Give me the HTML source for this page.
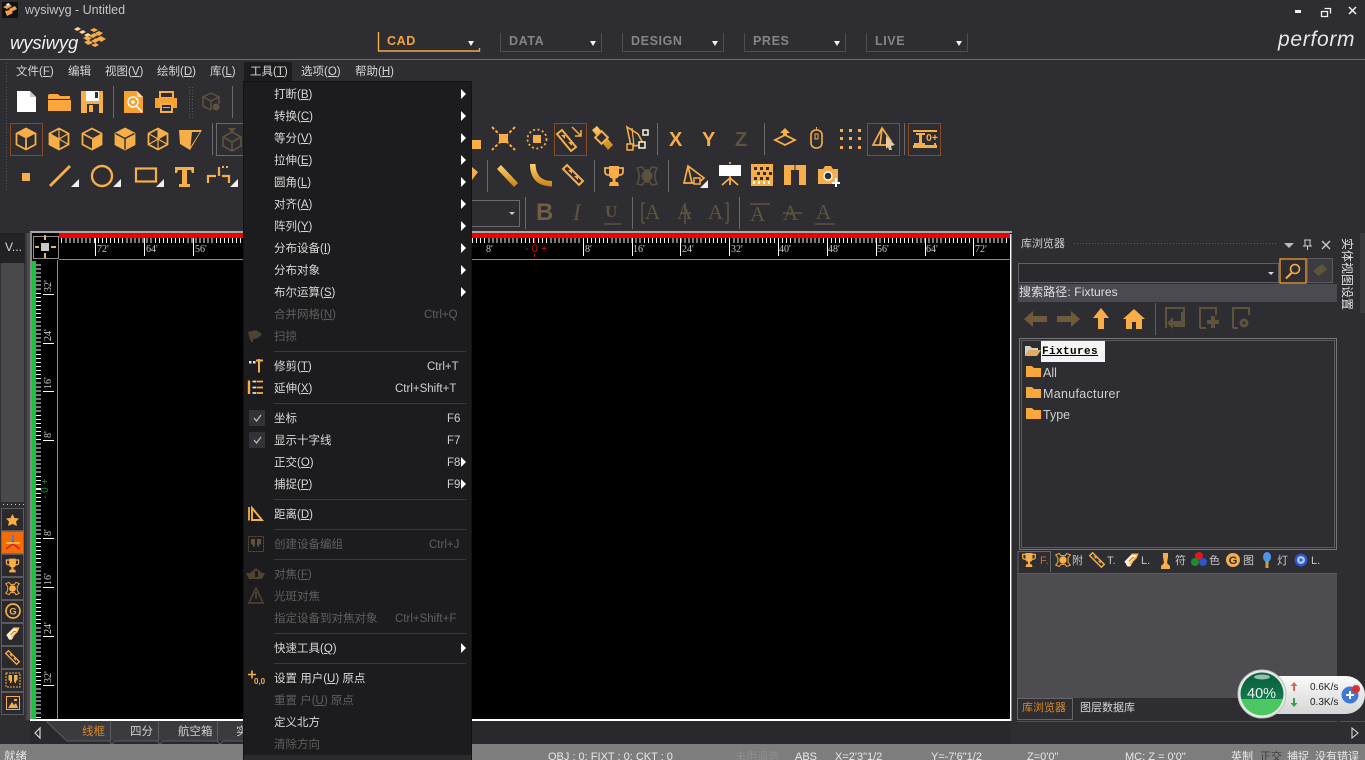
<!DOCTYPE html>
<html lang="zh">
<head>
<meta charset="utf-8">
<title>wysiwyg - Untitled</title>
<style>
html,body{margin:0;padding:0;width:1365px;height:760px;overflow:hidden;background:#2d2d32}
body{position:relative;font:12px/16px "Liberation Sans","Noto Sans CJK SC",sans-serif;color:#d6d6d6}
.a,.t{position:absolute}
.t{white-space:nowrap;height:16px;line-height:16px}
svg{position:absolute;left:0;top:0}
.m{position:absolute;left:274px;white-space:nowrap;height:16px;line-height:16px;font-size:11.5px;color:#d8d8d8}
.t.d,.m.d{color:#5f5f5f}
.nav{position:absolute;top:34px;font:bold 12.5px/14px "Liberation Sans",sans-serif;letter-spacing:.6px;color:#858585}
.st{position:absolute;top:749px;font-size:11.5px;line-height:16px;color:#e8e8e8;white-space:nowrap}
.tb{position:absolute;top:553px;font-size:11px;line-height:16px;color:#c8c8c8}
</style>
</head>
<body>

<!-- base graphics -->
<svg width="1365" height="760" viewBox="0 0 1365 760">
<defs>
<pattern id="dots" width="3" height="3" patternUnits="userSpaceOnUse"><rect width="1" height="1" fill="#5a5a5e"/></pattern>
<linearGradient id="gl" x1="0" y1="0" x2="0" y2="1"><stop offset="0" stop-color="#ffd071"/><stop offset="1" stop-color="#c98212"/></linearGradient>
<linearGradient id="pill" x1="0" y1="0" x2="0" y2="1"><stop offset="0" stop-color="#fafafa"/><stop offset="1" stop-color="#d6d6d6"/></linearGradient>
<linearGradient id="gdark" x1="0" y1="0" x2="0" y2="1"><stop offset="0" stop-color="#0a5c3a"/><stop offset="1" stop-color="#117a4b"/></linearGradient>
<symbol id="cubeA" viewBox="-12 -12 24 24" overflow="visible"><path d="M0-10.5 9.5-5.5V5.5L0 10.5-9.5 5.5V-5.5Z" fill="none" stroke="#f8ae48" stroke-width="1.800"/><path d="M-9.500-5.500 0-.5 9.500-5.500 0-10.500Z" fill="#f8ae48"/><path d="M0-.5V10.500" stroke="#f8ae48" stroke-width="1.800"/></symbol>
<symbol id="cubeB" viewBox="-12 -12 24 24" overflow="visible"><path d="M0-10.5 9.5-5.5V5.5L0 10.5-9.5 5.5V-5.5Z" fill="none" stroke="#f8ae48" stroke-width="1.800"/><path d="M-9.500-5.500 0-.5V10.500L-9.500 5.500Z" fill="#f8ae48"/><path d="M0-10.500V10.500M-9.500 5.500 9.500-5.500M-9.500-5.500 9.500 5.500" stroke="#f8ae48" stroke-width="1.200"/></symbol>
<symbol id="cubeC" viewBox="-12 -12 24 24" overflow="visible"><path d="M0-10.5 9.5-5.5V5.5L0 10.5-9.5 5.5V-5.5Z" fill="none" stroke="#f8ae48" stroke-width="1.800"/><path d="M0-.5 9.500-5.500V5.500L0 10.500Z" fill="#f8ae48"/><path d="M-9.500-5.500 0-.5" stroke="#f8ae48" stroke-width="1.800"/></symbol>
<symbol id="cubeD" viewBox="-12 -12 24 24" overflow="visible"><path d="M0-10.5 9.5-5.5V5.5L0 10.5-9.5 5.5V-5.5Z" fill="#f8ae48" stroke="#f8ae48" stroke-width="1.800"/><path d="M-9.500-5.500 0-.5 9.500-5.500" fill="none" stroke="#2d2d32" stroke-width="1.400"/><path d="M0-.5V10.500" stroke="#2d2d32" stroke-width="1.400"/></symbol>
<symbol id="cubeE" viewBox="-12 -12 24 24" overflow="visible"><path d="M0-10.5 9.5-5.5V5.5L0 10.5-9.5 5.5V-5.5Z" fill="none" stroke="#f8ae48" stroke-width="1.800"/><path d="M0-.5 9.500-5.500 0-10.500Z" fill="#f8ae48"/><path d="M0-10.500V10.500M-9.500-5.500 9.500 5.500M-9.500 5.500 9.500-5.500" stroke="#f8ae48" stroke-width="1.200"/></symbol>
<symbol id="corner" viewBox="0 0 8 8"><path d="M8 0V8H0Z" fill="#f0f0f0"/></symbol>
<symbol id="trophy" viewBox="-10 -11 20 22" overflow="visible"><path d="M-5-10H5V-1Q5 2 1.500 2.500V6H4L5 10H-5L-4 6H-1.500V2.500Q-5 2-5-1Z" fill="#f8ae48"/><path d="M-5-8H-9V-4Q-9-1-5-1M5-8H9V-4Q9-1 5-1" fill="none" stroke="#f8ae48" stroke-width="1.800"/></symbol>
<symbol id="spot" viewBox="-11 -11 22 22" overflow="visible"><circle r="5" fill="#f8ae48"/><path d="M-10-7-5-9-3-6H3L5-9 10-7 7-3V3L10 7 5 9 3 6H-3L-5 9-10 7-7 3V-3Z" fill="none" stroke="#f8ae48" stroke-width="1.400"/></symbol>
<symbol id="rul" viewBox="-11 -11 22 22" overflow="visible"><path d="M-6-10-10-6 6 10 10 6Z" fill="none" stroke="#f8ae48" stroke-width="2"/><path d="M-5-5-1-5-1-1ZM1 1 5 1 5 5Z" fill="#f8ae48"/><path d="M-3-7 7 3" stroke="#f8ae48" stroke-width="1"/></symbol>
<symbol id="book" viewBox="-11 -11 22 22" overflow="visible"><path d="M-9 2 1-8H9L-1 9H-5Z" fill="#fff2d6"/><path d="M1-8H9L7-3-2 6" fill="none" stroke="#f8ae48" stroke-width="2"/><path d="M-3 2 2-3H5" fill="none" stroke="#c98212" stroke-width="1.600"/></symbol>
</defs>

<rect width="1365" height="760" fill="#2d2d32"/>
<rect y="59" width="1365" height="1" fill="#6e6e6e"/>

<!-- window icon -->
<rect x="2" y="2" width="16" height="16" fill="#111"/>
<path d="M3 7 9 4 12 6 7 9ZM9 9 15 6 17 9 11 12ZM5 11 10 10 13 13 7 16Z" fill="#f0a050"/><path d="M6 4 9 3 10 5 7 6Z" fill="#e6e6e6"/>
<!-- logo cluster -->
<g fill="#f5a947">
<path d="M74 29 78 27 81 29 77 31ZM79 32 83 30 86 32 82 34ZM84 35 88 33 91 35 87 37Z" fill="#ffd58f"/>
<path d="M90 30 94 28 98 30 94 32ZM83 38 87 36 92 38 88 41ZM89 36 94 33 98 35 93 38ZM95 33 99 31 103 33 99 36Z"/>
<path d="M84 42 89 40 93 43 88 45ZM91 41 96 38 100 40 95 43ZM97 38 101 36 106 39 101 42ZM91 45 96 43 99 45 95 47Z"/>
</g>
<!-- window controls -->
<rect x="1295" y="10" width="6" height="3" fill="#f0f0f0"/>
<path d="M1324.500 8.500h6v5M1321.500 11.500h6v5h-6Z" fill="none" stroke="#f0f0f0" stroke-width="1.300"/>
<path d="M1349 7 1356 14M1356 7 1349 14" stroke="#f0f0f0" stroke-width="1.500"/>
<!-- nav tabs -->
<g fill="none" stroke="#4e4e52">
<path d="M500.500 33V51.500H601.500V33M622.500 33V51.500H723.500V33M744.500 33V51.500H845.500V33M866.500 33V51.500H967.500V33"/>
</g>
<path d="M378.500 32V51H479.500V48" fill="none" stroke="#f5a947" stroke-width="1.400"/>
<path d="M468 41h6l-3 5ZM590 41h6l-3 5ZM712 41h6l-3 5ZM834 41h6l-3 5ZM956 41h6l-3 5Z" fill="#f0f0f0"/>
<!-- grips -->
<rect x="5" y="62" width="3" height="20" fill="url(#dots)"/>
<rect x="4" y="86" width="3" height="106" fill="url(#dots)"/>
<rect x="189" y="86" width="4" height="33" fill="url(#dots)"/>

<!-- row 1 -->
<path d="M17 91H30L36 97V112H17Z" fill="#fff"/><path d="M30 91 36 97H30Z" fill="#c9c9c9"/>
<path d="M48 96Q48 94 50 94H58L60 96H70V99H48Z" fill="#f8a83a"/><path d="M48 100H71V111H48Z" fill="#f8a83a"/>
<path d="M81 91H103V113H81Z" fill="#f8ae48"/><rect x="86" y="91" width="13" height="10" fill="#fff"/><rect x="95" y="92" width="3" height="6" fill="#2d2d32"/><rect x="87" y="104" width="12" height="9" fill="#2d2d32"/><rect x="89" y="105" width="4" height="7" fill="#f8ae48"/>
<rect x="113" y="86" width="1" height="32" fill="#6a6a6a"/>
<path d="M124 91H137L143 97V113H124Z" fill="#f8a030"/><path d="M137 91 143 97H137Z" fill="#ffd9a0"/><circle cx="133" cy="102" r="5" fill="none" stroke="#fff" stroke-width="1.500"/><path d="M136.500 106 142 112M131 102h4M133 100v4" stroke="#fff" stroke-width="1.500"/>
<path d="M160 92H173V98H160Z" fill="none" stroke="#f8ae48" stroke-width="2"/><path d="M155 98H177V108H173V104H160V108H155Z" fill="#f8a030"/><path d="M161 104H172V112H161Z" fill="none" stroke="#f8ae48" stroke-width="2"/><rect x="163" y="107" width="7" height="1" fill="#f8ae48"/>
<g stroke="#5f5340" fill="none" stroke-width="1.500"><path d="M211 93 219 97V104M211 93 203 97V106L211 110M203 97 211 101 219 97M211 101V110"/></g><circle cx="216" cy="107" r="3.500" fill="#5f5340"/>
<rect x="232" y="86" width="1" height="32" fill="#6a6a6a"/>

<!-- row 2 -->
<rect x="10.500" y="123.500" width="32" height="32" fill="none" stroke="#8a4a22"/>
<use href="#cubeA" x="14" y="127" width="24" height="24"/>
<use href="#cubeB" x="47" y="127" width="24" height="24"/>
<use href="#cubeC" x="80" y="127" width="24" height="24"/>
<use href="#cubeD" x="113" y="127" width="24" height="24"/>
<use href="#cubeE" x="146" y="127" width="24" height="24"/>
<path d="M179 130H202L190 150 180 144Z" fill="#f8ae48"/><path d="M192 132H200L190.500 147Z" fill="#2d2d32"/>
<rect x="212" y="123" width="1" height="32" fill="#6a6a6a"/>
<rect x="216.500" y="123.500" width="28" height="32" fill="none" stroke="#6a6a6a"/>
<path d="M232 132 241 137V146L232 151 223 146V137ZM223 137 232 142 241 137M232 142V151" fill="none" stroke="#5f5340" stroke-width="1.600"/><path d="M228 128H236L232 133Z" fill="#5f5340"/>

<!-- row 2 right -->
<rect x="472" y="140" width="9" height="9" fill="#f8ae48"/>
<g stroke="#f8ae48" stroke-width="2" stroke-dasharray="3 2"><path d="M492 127 515 150M515 127 492 150"/></g><rect x="499" y="134" width="9" height="9" fill="#f8ae48"/>
<circle cx="537" cy="139" r="9.500" fill="none" stroke="#f8ae48" stroke-width="1.800" stroke-dasharray="2 2.500"/><rect x="533" y="135" width="8" height="8" fill="#f8ae48"/>
<rect x="554.500" y="123.500" width="32" height="32" fill="none" stroke="#8a4a22"/>
<g transform="translate(567 141)"><path d="M-10-7-5-11 9 6 4 10Z" fill="none" stroke="#f8ae48" stroke-width="2"/><path d="M-6-6-2-6-2-2ZM1 1 5 1 5 5Z" fill="#f8ae48"/><path d="M-3-8 7 3" stroke="#f8ae48"/></g><path d="M572 127 581 136M581 130V136H575" fill="none" stroke="#f8ae48" stroke-width="1.500"/>
<path d="M592 130 597 126 613 145 608 150Z" fill="url(#gl)"/><rect x="597" y="133" width="9" height="9" transform="rotate(45 601.500 137.500)" fill="#2d2d32" stroke="#f8ae48" stroke-width="2"/>
<path d="M627 127 638 134 644 145 631 146Z" fill="none" stroke="#f8ae48" stroke-width="1.600"/><path d="M632 128 634 146" stroke="#f8ae48" stroke-width="1.200"/><g fill="#2d2d32" stroke="#f8ae48" stroke-width="1.500"><rect x="643" y="130" width="5" height="5" stroke="#fff2d6"/><rect x="627" y="144" width="6" height="6"/><rect x="639" y="142" width="6" height="6" stroke="#fff2d6"/></g>
<rect x="657" y="123" width="1" height="32" fill="#6a6a6a"/>
<rect x="764" y="123" width="1" height="32" fill="#6a6a6a"/>
<path d="M785 128 790 133H787V140H783V133H780ZM773 140 785 134 797 140 785 146Z" fill="#f8ae48"/><path d="M777 140 785 136 793 140 785 144Z" fill="#2d2d32"/>
<rect x="811" y="130" width="11" height="18" rx="5" fill="none" stroke="#f8ae48" stroke-width="1.600"/><rect x="815" y="134" width="3" height="5" fill="none" stroke="#f8ae48"/><path d="M816.500 127V130" stroke="#f8ae48"/>
<g fill="#f8ae48"><rect x="840" y="129" width="3" height="3"/><rect x="849" y="129" width="3" height="3"/><rect x="858" y="129" width="3" height="3"/><rect x="840" y="137" width="3" height="3"/><rect x="849" y="137" width="3" height="3"/><rect x="858" y="137" width="3" height="3"/><rect x="840" y="146" width="3" height="3"/><rect x="849" y="146" width="3" height="3"/><rect x="858" y="146" width="3" height="3"/></g>
<rect x="867.500" y="123.500" width="32" height="32" fill="none" stroke="#8a4a22"/>
<path d="M882 128 873 145H888L891 141ZM882 128 880 145" fill="none" stroke="#f8ae48" stroke-width="1.700"/><path d="M886 136 895 145 891 146 892 150 889 150 888 147 886 149Z" fill="#e9c9a0"/>
<rect x="904" y="123" width="1" height="32" fill="#6a6a6a"/>
<rect x="908.500" y="123.500" width="32" height="32" fill="none" stroke="#8a4a22"/>
<rect x="913" y="130" width="24" height="2" fill="#f8ae48"/>
<path d="M916 133H925V135H922V143H925V145H916V143H919V135H916Z" fill="#f8ae48"/>
<text x="926" y="141" font-family="Liberation Sans" font-weight="bold" font-size="10.500" fill="#f8ae48">0+</text>
<rect x="913" y="145" width="24" height="3" fill="#f8ae48"/><rect x="914" y="143" width="2" height="2" fill="#f8ae48"/><rect x="934" y="143" width="2" height="2" fill="#f8ae48"/>

<!-- row 3 -->
<rect x="22" y="173" width="8" height="8" fill="#f8ae48"/>
<path d="M50 186 70 166" stroke="#f8ae48" stroke-width="2.800"/><use href="#corner" x="71" y="179" width="8" height="8"/>
<circle cx="102" cy="176" r="10" fill="none" stroke="#f8ae48" stroke-width="2.400"/><use href="#corner" x="113" y="179" width="8" height="8"/>
<rect x="136" y="168.500" width="20" height="13" fill="none" stroke="#f8ae48" stroke-width="2.200"/><use href="#corner" x="156" y="179" width="8" height="8"/>
<path d="M175 167H194V173H192L191 170H187V184H190V187H179V184H182V170H178L177 173H175Z" fill="#f8ae48"/>
<path d="M208 183V176H216M229 183V176H222M219 167V176" fill="none" stroke="#f8ae48" stroke-width="2.200"/><path d="M222 167h2M226 167h2" stroke="#f8ae48" stroke-width="2"/><use href="#corner" x="230" y="179" width="8" height="8"/>

<!-- row 3 right -->
<path d="M472 167 478 172 472 180Z" fill="#f8ae48"/>
<rect x="487" y="160" width="1" height="32" fill="#6a6a6a"/>
<path d="M497 169 501 165 518 183 514 187Z" fill="url(#gl)"/>
<path d="M530 164H535.500Q536 181 552 181V186.500Q530 186 530 164Z" fill="url(#gl)"/>
<use href="#rul" x="562" y="164" width="22" height="22"/>
<rect x="594" y="160" width="1" height="32" fill="#6a6a6a"/>
<use href="#trophy" x="604" y="165" width="20" height="22"/>
<g transform="translate(647 176)" opacity=".95"><circle r="5.500" fill="#5f5340"/><path d="M-10-8-5-9-3-6H3L5-9 10-8 8-3V3L10 8 5 9 3 6H-3L-5 9-10 8-8 3V-3Z" fill="none" stroke="#5f5340" stroke-width="1.500"/></g>
<rect x="668" y="160" width="1" height="32" fill="#6a6a6a"/>
<path d="M688 166 684 183H698L704 178ZM688 166 692 183" fill="none" stroke="#f8ae48" stroke-width="1.700"/><rect x="694" y="178" width="6" height="6" fill="#2d2d32" stroke="#f8ae48" stroke-width="1.500"/><use href="#corner" x="700" y="180" width="8" height="8"/>
<rect x="719" y="165" width="22" height="11" fill="#fff"/><path d="M730 176V185M730 178 722 185M730 178 738 185M729 163h2" stroke="#f8ae48" stroke-width="1.800" fill="none"/>
<rect x="751" y="164" width="22" height="22" fill="#f8ae48"/><g fill="#2d2d32"><rect x="754" y="167" width="3" height="3"/><rect x="760" y="167" width="3" height="3"/><rect x="766" y="167" width="3" height="3"/><rect x="757" y="172" width="3" height="3"/><rect x="763" y="172" width="3" height="3"/><rect x="769" y="172" width="3" height="3"/><rect x="754" y="177" width="3" height="3"/><rect x="760" y="177" width="3" height="3"/><rect x="766" y="177" width="3" height="3"/></g><g fill="#fff"><rect x="753" y="181" width="2" height="3"/><rect x="758" y="181" width="2" height="3"/><rect x="763" y="181" width="2" height="3"/><rect x="768" y="181" width="2" height="3"/></g>
<path d="M784 165H806V185H799V170H795V170H791V185H784Z" fill="#f8ae48"/><path d="M795 165V171" stroke="#2d2d32"/>
<path d="M818 169H823L825 166H831L833 169H838V184H818Z" fill="#f8ae48"/><circle cx="828" cy="176" r="4" fill="#2d2d32" stroke="#fff" stroke-width="1.400"/><path d="M836 178V187M832 183H840" stroke="#fff" stroke-width="2"/>

<!-- row 4 -->
<rect x="470" y="200.500" width="49.500" height="26" fill="none" stroke="#6a6a6a"/>
<path d="M509 212h6l-3 3Z" fill="#c8c8c8"/>
<rect x="525" y="197" width="1" height="32" fill="#6a6a6a"/>
<rect x="632" y="197" width="1" height="32" fill="#6a6a6a"/>
<rect x="739" y="197" width="1" height="32" fill="#6a6a6a"/>
<g fill="none" stroke="#5f5340" stroke-width="1.600">
<path d="M604 224H621"/>
<path d="M642 203V223M645 203H642M645 223H642"/>
<path d="M685 203V224"/><path d="M680 213H691"/>
<path d="M728 203V223M725 203H728M725 223H728"/>
<path d="M750 204H770"/><path d="M783 213H802"/><path d="M815 224H835"/>
</g>
<rect x="1011" y="233" width="6" height="490" fill="#2d2d32"/>

<!-- left dock -->
<rect x="0" y="233" width="25" height="30" fill="#222225"/>
<rect x="1" y="263" width="23" height="239" fill="#48484d"/>
<rect x="25" y="233" width="5" height="487" fill="#3a3a3e"/>
<rect x="27" y="233" width="3" height="487" fill="#4c4c50"/>
<g fill="#cfcfcf"><rect x="3" y="504" width="1" height="1"/><rect x="7" y="504" width="1" height="1"/><rect x="11" y="504" width="1" height="1"/><rect x="15" y="504" width="1" height="1"/><rect x="19" y="504" width="1" height="1"/><rect x="23" y="504" width="1" height="1"/></g>
<g fill="#2a2a2e" stroke="#5a5a5f">
<rect x="1.500" y="508.500" width="22" height="22"/><rect x="1.500" y="554.500" width="22" height="22"/><rect x="1.500" y="577.500" width="22" height="22"/><rect x="1.500" y="600.500" width="22" height="22"/><rect x="1.500" y="623.500" width="22" height="22"/><rect x="1.500" y="646.500" width="22" height="22"/><rect x="1.500" y="669.500" width="22" height="22"/><rect x="1.500" y="692.500" width="22" height="22"/>
</g>
<rect x="2" y="532" width="22" height="21" fill="#f26c0c"/><rect x="1.500" y="531.500" width="22" height="22" fill="none" stroke="#6e6e6e"/>
<path d="M12.500 514 14.500 518 19 518.500 16 521.500 17 526 12.500 524 8 526 9 521.500 6 518.500 10.500 518Z" fill="#f8ae48"/>
<path d="M13 536 13 544 6 549M13 544 20 549" stroke="#d72020" stroke-width="1.500" fill="none"/><path d="M6 543H20" stroke="#f4d040" stroke-width="1.500"/><path d="M13 535V541" stroke="#4a7ae0" stroke-width="2"/>
<use href="#trophy" x="5" y="558" width="15" height="15"/>
<use href="#spot" x="5" y="581" width="15" height="15"/>
<circle cx="13" cy="611" r="7" fill="none" stroke="#f8ae48" stroke-width="1.700"/><text x="13" y="614.500" font-family="Liberation Sans" font-weight="bold" font-size="9.500" text-anchor="middle" fill="#f8ae48">G</text>
<use href="#book" x="5" y="626" width="15" height="15"/>
<use href="#rul" x="5" y="650" width="15" height="15"/>
<rect x="6" y="673" width="14" height="14" fill="none" stroke="#f8ae48" stroke-dasharray="2 1"/><path d="M8.500 675H12V681L11 683H10V681L8.500 680ZM14 675H17.500V680L16 681V683H15L14 681Z" fill="#f8ae48"/>
<rect x="6.500" y="696.500" width="13" height="13" fill="none" stroke="#f8ae48"/><path d="M8 708 12 702 14 705 16 703 18 708Z" fill="#f8ae48"/><rect x="14" y="699" width="3" height="2" fill="#f8ae48"/>

<!-- canvas -->
<rect x="30" y="232" width="982" height="489" fill="#000"/>
<rect x="30" y="231" width="982" height="2" fill="#a8a8a8"/>
<rect x="30" y="232" width="2" height="488" fill="#8a8a8a"/>
<rect x="59" y="233" width="951" height="5" fill="#ee0000"/>
<g stroke="#f4f4f4" stroke-dasharray="1 3.067" shape-rendering="crispEdges" fill="none">
<path d="M534 240.500H1010M534 240.500H59" stroke-width="5"/>
<path d="M38.500 489V719M38.500 489V261" stroke-width="5"/>
</g>
<rect x="59" y="259" width="951" height="1" fill="#8e8e8e"/>
<rect x="57" y="260" width="1" height="459" fill="#8e8e8e"/>
<rect x="32" y="261" width="4" height="458" fill="#18c43a"/>
<rect x="30" y="719" width="981" height="2" fill="#fff"/>
<rect x="1010" y="234" width="1.500" height="487" fill="#fff"/>
<!-- corner -->
<rect x="33.500" y="236.500" width="25" height="22" fill="#000" stroke="#8e8e8e"/>
<rect x="41" y="243" width="8" height="8" fill="#c8c8c8"/><path d="M45 235V240M45 253V258M35 247H39M51 247H56" stroke="#e9b25f" stroke-width="2"/>
<!-- major ticks top -->
<g stroke="#fff" stroke-width="1">
<path d="M95.500 238V256M144.500 238V256M193.500 238V256M583.500 238V256M632.500 238V256M680.500 238V256M729.500 238V256M778.500 238V256M827.500 238V256M876.500 238V256M925.500 238V256M973.500 238V256"/>
<path d="M43 294.500H54M43 343.500H54M43 391.500H54M43 440.500H54M43 538.500H54M43 587.500H54M43 636.500H54M43 685.500H54"/>
</g>
<g fill="#c9c9c9" font-family="Liberation Serif" font-size="10">
<text x="97" y="252">72'</text><text x="146" y="252">64'</text><text x="195" y="252">56'</text>
<text x="486" y="252">8'</text><text x="585" y="252">8'</text><text x="633" y="252">16'</text><text x="682" y="252">24'</text><text x="731" y="252">32'</text><text x="779" y="252">40'</text><text x="828" y="252">48'</text><text x="877" y="252">56'</text><text x="926" y="252">64'</text><text x="975" y="252">72'</text>
<text transform="translate(51 292) rotate(-90)">32'</text>
<text transform="translate(51 341) rotate(-90)">24'</text>
<text transform="translate(51 389) rotate(-90)">16'</text>
<text transform="translate(51 438) rotate(-90)">8'</text>
<text transform="translate(51 536) rotate(-90)">8'</text>
<text transform="translate(51 585) rotate(-90)">16'</text>
<text transform="translate(51 634) rotate(-90)">24'</text>
<text transform="translate(51 683) rotate(-90)">32'</text>
</g>
<text x="525" y="252" fill="#c01818" font-family="Liberation Sans" font-size="11">- 0 +</text>
<text transform="translate(48 499) rotate(-90)" fill="#1c9a30" font-family="Liberation Sans" font-size="10">- 0 +</text>
<path d="M534.500 238V243M534.500 254V257" stroke="#c01818"/>

<!-- bottom tabs -->
<rect x="30" y="721" width="982" height="23" fill="#29292d"/>
<path d="M46 721 67 741H318V721Z" fill="#3a3a3f"/>
<g fill="none" stroke="#5c5c60"><path d="M46 721 67 741H109L112 744 115 741H157L160 744 163 741H217L220 744 223 741H244"/><path d="M110.500 721V741M158.500 721V741M217.500 721V741"/></g>
<path d="M40 728 35 733 40 738Z" fill="none" stroke="#d8d8d8" stroke-width="1.200"/>

<!-- right panel -->
<rect x="1017" y="233" width="348" height="489" fill="#2d2d32"/>
<rect x="1072" y="241" width="204" height="5" fill="url(#dots)"/>
<path d="M1284 243h10l-5 5Z" fill="#bcbcbc"/>
<path d="M1304 240h7M1305 240v6h5v-6M1303 246h9M1307.500 246v4" stroke="#d0d0d0" fill="none"/>
<path d="M1322 241 1330 249M1330 241 1322 249" stroke="#d0d0d0" stroke-width="1.300"/>
<rect x="1018.500" y="263.500" width="260" height="19" fill="#2a2a2e" stroke="#606065"/>
<path d="M1268 272h6l-3 3Z" fill="#d8d8d8"/>
<rect x="1280" y="259" width="26" height="24" fill="#2d2d32" stroke="#e6942f" stroke-width="1.400"/>
<circle cx="1295" cy="269" r="4.500" fill="none" stroke="#f8ae48" stroke-width="1.600"/><path d="M1291.500 273 1286 278.500" stroke="#f8ae48" stroke-width="2"/>
<rect x="1307.500" y="258.500" width="25" height="24" fill="#3c3c40" stroke="#5a5a5f"/>
<path d="M1313 271 1322 264 1327 269 1319 276H1316Z" fill="#5f5340"/><path d="M1313 272 1318 277" stroke="#2d2d32"/>
<rect x="1018" y="284" width="319" height="18" fill="#4a4a50"/>
<path d="M1024 319 1033 311V316H1047V322H1033V327Z" fill="#6f5a3c"/>
<path d="M1080 319 1071 311V316H1057V322H1071V327Z" fill="#6f5a3c"/>
<path d="M1101 308 1109 318H1104V329H1098V318H1093Z" fill="#f8ae48"/>
<path d="M1134 309 1145 319H1142V329H1136V322H1132V329H1126V319H1123Z" fill="#f8ae48"/>
<rect x="1155" y="303" width="1" height="32" fill="#5e5e62"/>
<g fill="none" stroke="#5f5340" stroke-width="2">
<path d="M1166 328V308H1184V326H1174"/><path d="M1200 328V308H1216V315M1200 328H1206"/><path d="M1233 328V308H1249V315M1233 328H1238"/>
</g>
<path d="M1181 312V321H1173V317L1167 323 1173 329V325H1184V312Z" fill="#5f5340"/>
<path d="M1211 316V320H1207V324H1211V328H1215V324H1219V320H1215V316Z" fill="#5f5340"/>
<circle cx="1244" cy="323" r="4.500" fill="#5f5340"/><circle cx="1244" cy="323" r="1.500" fill="#2d2d32"/>
<rect x="1019.500" y="338.500" width="317" height="211" fill="none" stroke="#767679"/>
<rect x="1021.500" y="340.500" width="313" height="207" fill="none" stroke="#5c5c60"/>
<rect x="1041" y="341" width="64" height="21" fill="#f4f4f4"/>
<path d="M1025 356V346H1030L1032 348H1038V350H1029L1025 356Z" fill="#d6d0c4"/><path d="M1025 356 1029 350H1041L1037 356Z" fill="#e0ad62"/>
<path d="M1026 366H1032L1034 368H1041V377H1026Z" fill="#f8a83a"/>
<path d="M1026 387H1032L1034 389H1041V398H1026Z" fill="#f8a83a"/>
<path d="M1026 408H1032L1034 410H1041V419H1026Z" fill="#f8a83a"/>
<!-- tab strip -->
<path d="M1018 572.500V551.500H1050.500V572" fill="none" stroke="#66666a"/>
<use href="#trophy" x="1022" y="552" width="14" height="16"/>
<use href="#spot" x="1055" y="552" width="16" height="16"/>
<use href="#rul" x="1089" y="552" width="16" height="16"/>
<use href="#book" x="1123" y="552" width="16" height="16"/>
<path d="M1163 553H1168V557L1167 563L1170 566V569H1161V566L1164 563L1163 557Z" fill="#f8ae48"/>
<circle cx="1199" cy="556" r="4" fill="#e01818"/><circle cx="1195" cy="562" r="4" fill="#1f8a2e"/><circle cx="1203" cy="562" r="4" fill="#2a55cc"/>
<circle cx="1233" cy="560" r="7" fill="#f8ae48"/><text x="1233" y="564" font-family="Liberation Sans" font-weight="bold" font-size="11" text-anchor="middle" fill="#2d2d32">G</text>
<ellipse cx="1267" cy="557" rx="4" ry="5" fill="#4c96e8"/><rect x="1265.500" y="561" width="3" height="7" fill="#d69a40"/>
<circle cx="1301" cy="560" r="6.500" fill="#2a55cc"/><circle cx="1301" cy="560" r="4" fill="#a8c4e6"/><circle cx="1301" cy="560" r="1.500" fill="#2a55cc"/>
<rect x="1017" y="573" width="320" height="125" fill="#4c4c51"/>
<rect x="1017" y="573" width="320" height="1" fill="#5e5e62"/>
<rect x="1017.500" y="698.500" width="55" height="21" fill="#2d2d32" stroke="#66666a"/>
<rect x="1017" y="721" width="348" height="1" fill="#505054"/>
<rect x="1337" y="233" width="3" height="489" fill="#2d2d32"/>
<rect x="1360" y="233" width="5" height="80" fill="#3a3a3f"/>
<rect x="1011" y="722" width="354" height="22" fill="#2d2d32"/>
<path d="M1352 728V738L1358 733Z" fill="none" stroke="#d8d8d8" stroke-width="1.100"/>
<!-- status -->
<rect x="0" y="744" width="1365" height="16" fill="#7d7d7d"/>
<!-- net widget -->
<path d="M1270 676H1346A19 19 0 0 1 1346 714H1270Z" fill="url(#pill)"/>
<circle cx="1262" cy="694" r="24" fill="#e6ebe8" stroke="#bcc4c0"/>
<clipPath id="cc"><circle cx="1262" cy="694" r="21.500"/></clipPath>
<g clip-path="url(#cc)"><rect x="1240" y="672" width="44" height="27" fill="url(#gdark)"/><rect x="1240" y="699" width="44" height="18" fill="#4dc764"/></g>
<ellipse cx="1262" cy="677" rx="8" ry="2.500" fill="#cfe6da" opacity=".7"/>
<path d="M1294 682 1297.500 686H1295V691H1293V686H1290.500Z" fill="#d86a5c"/>
<path d="M1294 707 1297.500 703H1295V698H1293V703H1290.500Z" fill="#3a9a50"/>
<circle cx="1350" cy="695" r="8.500" fill="#4078d8"/><path d="M1350 691V699M1346 695H1354" stroke="#fff" stroke-width="2"/><circle cx="1356" cy="689" r="4" fill="#d82f2f"/>
</svg>

<!-- toolbar text glyph icons -->
<div class="t" style="left:669px;top:130px;font:bold 20px/20px 'Liberation Sans',sans-serif;color:#f8ae48;height:20px">X</div>
<div class="t" style="left:702px;top:130px;font:bold 20px/20px 'Liberation Sans',sans-serif;color:#f8ae48;height:20px">Y</div>
<div class="t" style="left:735px;top:130px;font:bold 20px/20px 'Liberation Sans',sans-serif;color:#5f5340;height:20px">Z</div>
<div class="t" style="left:536px;top:200px;font:bold 24px/26px 'Liberation Sans',sans-serif;color:#6f5f46;height:26px">B</div>
<div class="t" style="left:573px;top:201px;font:italic 23px/24px 'Liberation Serif',serif;color:#5f5340;height:24px">I</div>
<div class="t" style="left:605px;top:203px;font:bold 17px/18px 'Liberation Serif',serif;color:#5f5340;height:18px">U</div>
<div class="t" style="left:645px;top:201px;font:21px/22px 'Liberation Serif',serif;color:#5f5340;height:22px">A</div>
<div class="t" style="left:677px;top:201px;font:21px/22px 'Liberation Serif',serif;color:#5f5340;height:22px">A</div>
<div class="t" style="left:708px;top:201px;font:21px/22px 'Liberation Serif',serif;color:#5f5340;height:22px">A</div>
<div class="t" style="left:750px;top:203px;font:21px/22px 'Liberation Serif',serif;color:#5f5340;height:22px">A</div>
<div class="t" style="left:783px;top:202px;font:21px/22px 'Liberation Serif',serif;color:#5f5340;height:22px">A</div>
<div class="t" style="left:816px;top:201px;font:21px/22px 'Liberation Serif',serif;color:#5f5340;height:22px">A</div>

<!-- title + logos -->
<div class="t" style="left:25px;top:2px;font-size:12.500px;color:#c4c4c4">wysiwyg - Untitled</div>
<div class="t" style="left:10px;top:32px;height:22px;font:italic 18.500px/22px 'Liberation Sans',sans-serif;color:#f0f0f0;letter-spacing:-.1px">wysiwyg</div>
<div class="t" style="left:1278px;top:28px;height:24px;font:italic 21px/24px 'Liberation Sans',sans-serif;color:#e6e6e6;letter-spacing:.7px">perform</div>
<div class="nav" style="left:387px;color:#f2a544">CAD</div>
<div class="nav" style="left:509px">DATA</div>
<div class="nav" style="left:631px">DESIGN</div>
<div class="nav" style="left:753px">PRES</div>
<div class="nav" style="left:875px">LIVE</div>

<!-- menu bar -->
<div class="t" style="left:16px;top:64px;font-size:11.500px">文件(<u>F</u>)</div>
<div class="t" style="left:68px;top:64px;font-size:11.500px">编辑</div>
<div class="t" style="left:105px;top:64px;font-size:11.500px">视图(<u>V</u>)</div>
<div class="t" style="left:157px;top:64px;font-size:11.500px">绘制(<u>D</u>)</div>
<div class="t" style="left:210px;top:64px;font-size:11.500px">库(<u>L</u>)</div>
<div class="t" style="left:301px;top:64px;font-size:11.500px">选项(<u>O</u>)</div>
<div class="t" style="left:355px;top:64px;font-size:11.500px">帮助(<u>H</u>)</div>

<!-- ruler-dock text -->
<div class="t" style="left:5px;top:239px;color:#d8d8d8">V...</div>

<!-- bottom tabs text -->
<div class="t" style="left:82px;top:724px;color:#d98a2a;font-size:11.500px">线框</div>
<div class="t" style="left:130px;top:724px;color:#d0d0d0;font-size:11.500px">四分</div>
<div class="t" style="left:178px;top:724px;color:#d0d0d0;font-size:11.500px">航空箱</div>
<div class="t" style="left:236px;top:724px;color:#d0d0d0;font-size:11.500px">实体</div>

<!-- right panel text -->
<div class="t" style="left:1021px;top:236px;font-size:11px;color:#cfcfcf">库浏览器</div>
<div class="t" style="left:1019px;top:284px;font-size:12px;color:#e0e0e0;letter-spacing:.1px">搜索路径: Fixtures</div>
<div class="t" style="left:1042px;top:344px;font:bold 11px/16px 'Liberation Mono',monospace;color:#000;text-decoration:underline;letter-spacing:.4px">Fixtures</div>
<div class="t" style="left:1043px;top:365px;font:12.500px/16px 'Liberation Sans',sans-serif;color:#cfcfcf">All</div>
<div class="t" style="left:1043px;top:386px;font:12.500px/16px 'Liberation Sans',sans-serif;color:#cfcfcf;letter-spacing:.3px">Manufacturer</div>
<div class="t" style="left:1043px;top:407px;font:12.500px/16px 'Liberation Sans',sans-serif;color:#cfcfcf">Type</div>
<div class="tb" style="left:1040px;color:#b9752a">F.</div>
<div class="tb" style="left:1072px">附</div>
<div class="tb" style="left:1107px">T.</div>
<div class="tb" style="left:1141px">L.</div>
<div class="tb" style="left:1175px">符</div>
<div class="tb" style="left:1209px">色</div>
<div class="tb" style="left:1243px">图</div>
<div class="tb" style="left:1277px">灯</div>
<div class="tb" style="left:1311px">L.</div>
<div class="t" style="left:1022px;top:700px;font-size:11px;color:#d98a2a">库浏览器</div>
<div class="t" style="left:1080px;top:700px;font-size:11px;color:#d6d6d6">图层数据库</div>
<div class="a" style="left:1340px;top:238px;font-size:12px;line-height:13px;color:#e0e0e0;writing-mode:vertical-rl;text-orientation:sideways;white-space:nowrap">实体视图设置</div>
<div class="t" style="left:1247px;top:686px;font-size:14.500px;color:#f4f4f4">40%</div>
<div class="t" style="left:1310px;top:680px;font-size:10px;color:#222">0.6K/s</div>
<div class="t" style="left:1310px;top:695px;font-size:10px;color:#222">0.3K/s</div>

<!-- status -->
<div class="st" style="left:4px">就绪</div>
<div class="st" style="left:548px;font-size:11px">OBJ : 0; FIXT : 0; CKT : 0</div>
<div class="st" style="left:735px;color:#8e8e8e;font-size:11px">未用调谐</div>
<div class="st" style="left:795px;font-size:11px">ABS</div>
<div class="st" style="left:835px;font-size:11px">X=2'3"1/2</div>
<div class="st" style="left:931px;font-size:11px">Y=-7'6"1/2</div>
<div class="st" style="left:1027px;font-size:11px">Z=0'0"</div>
<div class="st" style="left:1125px;font-size:11px">MC: Z = 0'0"</div>
<div class="st" style="left:1231px;font-size:11px">英制</div>
<div class="st" style="left:1260px;font-size:11px;color:#3e3e3e">正交</div>
<div class="st" style="left:1287px;font-size:11px">捕捉</div>
<div class="st" style="left:1315px;font-size:11px">没有错误</div>

<!-- open menu -->
<div class="a" style="left:244px;top:62px;width:48px;height:20px;background:#1c1c1e"></div>
<div class="t" style="left:250px;top:64px;font-size:11.500px">工具(<u>T</u>)</div>
<div class="a" style="left:244px;top:82px;width:227px;height:678px;background:#1c1c1e;box-shadow:0 0 0 1px #141416">
<div class="a" style="left:0;top:673px;width:227px;height:5px;background:#2b2b2e"></div>
</div>
<div class="a" style="left:0;top:0;width:1365px;height:760px;pointer-events:none">
<div class="m" style="top:87px">打断(<u>B</u>)</div>
<div class="m" style="top:109px">转换(<u>C</u>)</div>
<div class="m" style="top:131px">等分(<u>V</u>)</div>
<div class="m" style="top:153px">拉伸(<u>E</u>)</div>
<div class="m" style="top:175px">圆角(<u>L</u>)</div>
<div class="m" style="top:197px">对齐(<u>A</u>)</div>
<div class="m" style="top:219px">阵列(<u>Y</u>)</div>
<div class="m" style="top:241px">分布设备(<u>I</u>)</div>
<div class="m" style="top:263px">分布对象</div>
<div class="m" style="top:285px">布尔运算(<u>S</u>)</div>
<div class="m d" style="top:307px">合并网格(<u>N</u>)</div>
<div class="t d" style="left:424px;top:307px;font-size:11.500px">Ctrl+Q</div>
<div class="m d" style="top:329px">扫掠</div>
<div class="m" style="top:359px">修剪(<u>T</u>)</div>
<div class="t" style="left:427px;top:359px;font-size:11.500px;color:#d0d0d0">Ctrl+T</div>
<div class="m" style="top:381px">延伸(<u>X</u>)</div>
<div class="t" style="left:395px;top:381px;font-size:11.500px;color:#d0d0d0">Ctrl+Shift+T</div>
<div class="m" style="top:411px">坐标</div>
<div class="t" style="left:447px;top:411px;font-size:11.500px;color:#d0d0d0">F6</div>
<div class="m" style="top:433px">显示十字线</div>
<div class="t" style="left:447px;top:433px;font-size:11.500px;color:#d0d0d0">F7</div>
<div class="m" style="top:455px">正交(<u>O</u>)</div>
<div class="t" style="left:447px;top:455px;font-size:11.500px;color:#d0d0d0">F8</div>
<div class="m" style="top:477px">捕捉(<u>P</u>)</div>
<div class="t" style="left:447px;top:477px;font-size:11.500px;color:#d0d0d0">F9</div>
<div class="m" style="top:507px">距离(<u>D</u>)</div>
<div class="m d" style="top:537px">创建设备编组</div>
<div class="t d" style="left:429px;top:537px;font-size:11.500px">Ctrl+J</div>
<div class="m d" style="top:567px">对焦(<u>F</u>)</div>
<div class="m d" style="top:589px">光斑对焦</div>
<div class="m d" style="top:611px">指定设备到对焦对象</div>
<div class="t d" style="left:395px;top:611px;font-size:11.500px">Ctrl+Shift+F</div>
<div class="m" style="top:641px">快速工具(<u>Q</u>)</div>
<div class="m" style="top:671px">设置 用户(<u>U</u>) 原点</div>
<div class="m d" style="top:693px">重置 户(<u>U</u>) 原点</div>
<div class="m" style="top:715px">定义北方</div>
<div class="m d" style="top:737px">清除方向</div>
</div>

<!-- menu icons -->
<svg width="1365" height="760" viewBox="0 0 1365 760" style="pointer-events:none">
<g fill="#fff">
<path d="M461 89 466 94 461 99ZM461 111 466 116 461 121ZM461 133 466 138 461 143ZM461 155 466 160 461 165ZM461 177 466 182 461 187ZM461 199 466 204 461 209ZM461 221 466 226 461 231ZM461 243 466 248 461 253ZM461 265 466 270 461 275ZM461 287 466 292 461 297ZM461 457 466 462 461 467ZM461 479 466 484 461 489ZM461 643 466 648 461 653Z"/>
</g>
<g fill="#38383b">
<rect x="274" y="351" width="192" height="1"/><rect x="274" y="403" width="192" height="1"/><rect x="274" y="499" width="192" height="1"/><rect x="274" y="529" width="192" height="1"/><rect x="274" y="559" width="192" height="1"/><rect x="274" y="633" width="192" height="1"/><rect x="274" y="663" width="192" height="1"/>
</g>
<rect x="249" y="410" width="16" height="16" fill="#333337"/>
<rect x="249" y="432" width="16" height="16" fill="#333337"/>
<path d="M254 418 256.500 421 261 415M254 440 256.500 443 261 437" fill="none" stroke="#c0c0c0" stroke-width="1.200"/>
<!-- scan -->
<path d="M248 332 256 330 262 334 258 338 250 340Z" fill="#4e4434"/><path d="M252 336V342" stroke="#4e4434" stroke-width="2"/>
<!-- trim -->
<rect x="249" y="361" width="2.500" height="2.500" fill="#e0e0e0"/><rect x="253" y="361" width="2.500" height="2.500" fill="#e0e0e0"/>
<path d="M256 360.500H263M259 359V372.500" stroke="#f8ae48" stroke-width="2"/>
<!-- extend -->
<path d="M249 380.500V394" stroke="#f8ae48" stroke-width="2.400"/><path d="M252.500 381.500H256M252.500 387.500H256M252.500 393H256" stroke="#e0e0e0" stroke-width="1.800"/><path d="M256.500 381.500H263M256.500 387.500H263M256.500 393H263" stroke="#f8ae48" stroke-width="1.800"/>
<!-- distance -->
<path d="M249 507V520.500" stroke="#f8ae48" stroke-width="1.800"/><path d="M252 508V520H262Z" fill="none" stroke="#f8ae48" stroke-width="1.900"/>
<!-- group -->
<rect x="248.500" y="536.500" width="15" height="15" fill="none" stroke="#5f5340" stroke-dasharray="2 1"/><path d="M251 539H255V545L254 547H253V545L251 544ZM257 539H261V544L259 545V547H258L257 545Z" fill="#5f5340"/>
<!-- focus -->
<path d="M256 568 262 573H265L262 579H249L246 573H250Z" fill="#4e4434"/><path d="M255 571H258V577H255Z" fill="#1c1c1e"/>
<path d="M256 588 263 603H249Z" fill="none" stroke="#4e4434" stroke-width="1.600"/><path d="M256 592V599" stroke="#4e4434" stroke-width="1.800"/>
<!-- origin -->
<path d="M248 674.500H256M252 670.500V678.500" stroke="#f8ae48" stroke-width="1.600"/>
<text x="254" y="684" font-family="Liberation Sans" font-size="8" font-weight="bold" fill="#f8ae48">0,0</text>
</svg>

</body>
</html>
